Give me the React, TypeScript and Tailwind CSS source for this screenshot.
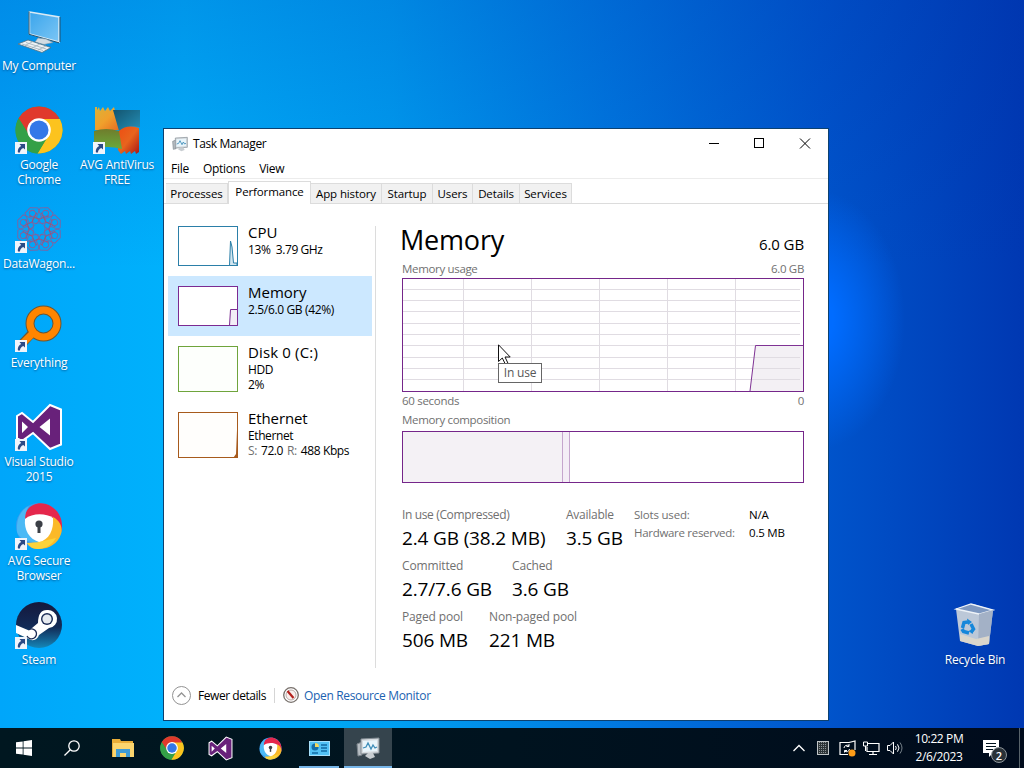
import React from "react";

type IconProps = { size?: number };

const Chrome: React.FC<IconProps> = ({ size = 48 }) => (
  <svg width={size} height={size} viewBox="0 0 48 48">
    <circle cx="24" cy="24" r="23.5" fill="#34a047" />
    <path d="M24 24 L3.6 12.3 A23.5 23.5 0 0 1 44.4 12.3 Z" fill="#e0392c" />
    <path d="M24 13 H44.9 A23.5 23.5 0 0 1 22.5 47.5 L33.5 29.5 Z" fill="#fcc31e" />
    <path d="M3.6 12.3 L14.5 29.5 L24 24 L24 13 L6 11 Z" fill="#e0392c" />
    <path d="M3.6 12.3 A23.5 23.5 0 0 0 22.5 47.5 L33 30 L14.5 29.5 Z" fill="#34a047" />
    <circle cx="24" cy="24" r="11.8" fill="#fff" />
    <circle cx="24" cy="24" r="9.5" fill="#3478e8" />
  </svg>
);

const VisualStudio: React.FC<IconProps> = ({ size = 48 }) => (
  <svg width={size} height={size} viewBox="0 0 48 48">
    <path
      d="M2 13 L7 10 L18 19 L35 2 L46 6.500 V41.500 L35 46 L18 30 L7 38 L2 35.500 Z"
      fill="#68217a"
      stroke="#fff"
      strokeWidth="2"
    />
    <path d="M7 18.500 V30 L13 24 Z M35 15.500 V32.500 L24.500 24 Z" fill="#fff" />
  </svg>
);

const SecureBrowser: React.FC<IconProps> = ({ size = 48 }) => (
  <svg width={size} height={size} viewBox="0 0 48 48">
    <circle cx="24" cy="24" r="23" fill="#3b9df0" />
    <path d="M9 17 C10 5 21 -1 31 2 C43 6 49 17 46.500 30 C44 23 38 15 28 13 Z" fill="#e5274c" />
    <path d="M38 15 C46 19 48 27 46 32 C42 44 30 49 17 46 L12 41 C25 42 36 34 38 15 Z" fill="#fbb928" />
    <path d="M12 41 C15 46 20 47 24 47 C33 46 38 41 41 36 L24 40 Z" fill="#fcd33b" />
    <path d="M2 30 C1 16 6 8 14 4 C7 14 9 31 24 40 C14 41 5 38 2 30 Z" fill="#4bb9f5" />
    <path d="M10 17 C17 11 31 11 38 16 C39 28 34 38 24 40 C14 37 9 28 10 17 Z" fill="#fff" />
    <circle cx="24" cy="22" r="3.600" fill="#3b3f46" />
    <path d="M22.500 23 H25.500 V31 H22.500 Z" fill="#3b3f46" />
  </svg>
);

const MyComputer = () => (
  <svg width="48" height="48" viewBox="2 -1 48 48">
    <defs>
      <linearGradient id="screen" x1="0" y1="0" x2="1" y2="1">
        <stop offset="0" stopColor="#3aa5ec" />
        <stop offset="1" stopColor="#7cc6f5" />
      </linearGradient>
    </defs>
    <path d="M16.500 4 L46 9 V34 L16.500 26 Z" fill="url(#screen)" stroke="#d8eaf5" strokeWidth="1.500" />
    <path d="M16 3.500 V26.300 L46 34.800" fill="none" stroke="#23516f" />
    <path d="M47 9 V34" stroke="#23516f" />
    <path d="M25 30 L33 31 L40 34.500 L31 36.500 L22 34 Z" fill="#d3dce2" stroke="#8195a2" strokeWidth=".6" />
    <path d="M5 36 L15 32 L38 39.500 L29 44.500 Z" fill="#edf2f5" stroke="#54707f" strokeWidth=".8" />
    <path d="M9 36 L30 42.500 M13 34.500 L33 41 M12 37.500 L20 33.500 M19 40 L27 36 M25 42 L33 38" stroke="#9eafb8" strokeWidth=".8" />
  </svg>
);

const AvgFree = () => (
  <svg width="48" height="48" viewBox="0 0 48 48">
    <defs>
      <linearGradient id="avgA" x1="0" y1="0" x2="1" y2="1">
        <stop offset="0" stopColor="#d9b23a" />
        <stop offset=".5" stopColor="#f0a02c" />
        <stop offset="1" stopColor="#e66a22" />
      </linearGradient>
      <linearGradient id="avgB" x1="0" y1="0" x2="1" y2="1">
        <stop offset="0" stopColor="#13546f" />
        <stop offset="1" stopColor="#2590b8" />
      </linearGradient>
      <linearGradient id="avgC" x1="0" y1="0" x2="1" y2="1">
        <stop offset="0" stopColor="#ee4d12" />
        <stop offset=".5" stopColor="#e8641d" />
        <stop offset="1" stopColor="#a81717" />
      </linearGradient>
      <linearGradient id="avgD" x1="0" y1="0" x2="0" y2="1">
        <stop offset="0" stopColor="#6f7c2c" />
        <stop offset="1" stopColor="#6aaa3c" />
      </linearGradient>
    </defs>
    <path d="M2 1 H4 V4 L6 1 L7 5 L10 1 L12 5 L15 1 L17 5 L21 1 L27 24 H2 Z" fill="url(#avgA)" />
    <path d="M20 4 H47 V21 Q35 19 26 25 Z" fill="url(#avgB)" />
    <path d="M26 25 Q34 18 46 22 V46 L43 48 L42 45 L38 48 L37 45 L33 48 L32 45 L28 48 L25 44 Z" fill="url(#avgC)" />
    <path d="M1 25 Q13 21 26 25 L29 43 Q14 39 1 43 Z" fill="url(#avgD)" />
  </svg>
);

const DataWagon = () => (
  <svg width="48" height="48" viewBox="0 0 48 48" fill="none" stroke="#85609c" strokeWidth=".9">
    {[0, 45, 90, 135, 180, 225, 270, 315].map((angle) => (
      <g key={angle} transform={`rotate(${angle + 22.5} 24 24)`}>
        <path d="M17 14 V4 L24 1 L31 4 V14 L24 18 Z" />
        <path d="M20 8 L28 15 M28 8 L20 15" stroke="#a24f72" />
        <circle cx="24" cy="7" r="3" />
      </g>
    ))}
    <circle cx="24" cy="24" r="6" strokeDasharray="2 1" />
  </svg>
);

const Everything = () => (
  <svg width="48" height="48" viewBox="0 0 48 48">
    <circle cx="28.500" cy="19.500" r="13.500" fill="none" stroke="#6b5634" strokeWidth="9" />
    <path d="M19 27 L5 42" stroke="#6b5634" strokeWidth="9" />
    <path d="M20 27 L4 43" stroke="#ff8500" strokeWidth="7" />
    <circle cx="28.500" cy="19.500" r="13.500" fill="none" stroke="#ff8500" strokeWidth="7" />
  </svg>
);

const Steam = () => (
  <svg width="48" height="48" viewBox="0 0 48 48">
    <defs>
      <linearGradient id="steam" x1="0" y1="0" x2="0" y2="1">
        <stop offset="0" stopColor="#15183c" />
        <stop offset=".55" stopColor="#122b57" />
        <stop offset="1" stopColor="#1587b8" />
      </linearGradient>
    </defs>
    <circle cx="24" cy="24" r="23" fill="url(#steam)" />
    <path d="M1 24 L14 29.500 L23 22 Q23 9 32 9 A9 9 0 0 1 34 27 L24 34 Q22 40 16 39 L1 32 Z" fill="#fff" />
    <circle cx="32" cy="18" r="6" fill="#1b2b55" />
    <circle cx="32" cy="18" r="4.600" fill="#e6eaf0" />
    <path d="M14 28.500 A5 5 0 1 1 12 35" fill="none" stroke="#1b2b55" strokeWidth="1.300" />
  </svg>
);

const RecycleBin = () => (
  <svg width="48" height="48" viewBox="0 -1 48 48">
    <path d="M5 7 L22 2 L42 8 L38 42 L27 44 L9 39 Z" fill="#bcc8d8" />
    <path d="M5 7 L20 2 L42 8 L28 12 Z" fill="#7e98c0" stroke="#eef3f8" strokeWidth="1.300" />
    <path d="M28 12 L42 8 L38 42 L27 44 Z" fill="#a3b1c6" />
    <path d="M9 32 L25 37 L38 34 L38 42 L27 44 L9 39 Z" fill="#dad6cc" />
    <g fill="none" stroke="#1687da" strokeWidth="3.500">
      <path d="M11.500 26 L13 20.500 L17 20" />
      <path d="M20 22 L22.500 27 L21 29" />
      <path d="M18 31 L12.500 29.500 L11 27" />
    </g>
    <path d="M16 16.500 L21 20 L17 23 Z M24 26 L21.500 32 L17.500 29 Z" fill="#1687da" />
  </svg>
);

const Shortcut = () => (
  <svg className="absolute bottom-0 left-0" width="12" height="12" viewBox="0 0 12 12">
    <rect width="12" height="12" fill="#f0f4fb" />
    <path d="M4.500 2 H10 V7.500 L8.300 6 C6 7 5 8.500 5 10.500 H3 C2.300 7.500 4 5 6.200 3.900 Z" fill="#2c4a86" />
  </svg>
);

const TaskManagerIcon: React.FC<IconProps> = ({ size = 16 }) => (
  <svg width={size} height={size} viewBox="0 0 24 24">
    <path d="M1 8 L6 6 V19 L2 20 Z" fill="#b8bec3" stroke="#7c858c" />
    <path d="M5 3 L23 2 V17 L5 18 Z" fill="#d6dbdf" stroke="#828b92" />
    <path d="M7 5 L21 4.200 V15 L7 16 Z" fill="#e9f5fb" />
    <path d="M7 12 L10 11 L12 7 L15 13 L17 9 L19 12 L21 11" fill="none" stroke="#3f8db8" strokeWidth="1.300" />
    <path d="M12 17 H17 L19 21 L14 23 L9 20 Z" fill="#c8cdd1" />
  </svg>
);

type Shortcuts = { label: string; place: string; icon: React.ReactNode; link?: boolean };

const desktopIcons: Shortcuts[] = [
  { label: "My Computer", place: "left-0 top-[7px]", icon: <MyComputer /> },
  { label: "Google Chrome", place: "left-0 top-[106px]", icon: <Chrome />, link: true },
  { label: "AVG AntiVirus FREE", place: "left-[78px] top-[106px]", icon: <AvgFree />, link: true },
  { label: "DataWagon...", place: "left-0 top-[205px]", icon: <DataWagon />, link: true },
  { label: "Everything", place: "left-0 top-[304px]", icon: <Everything />, link: true },
  { label: "Visual Studio 2015", place: "left-0 top-[403px]", icon: <VisualStudio />, link: true },
  { label: "AVG Secure Browser", place: "left-0 top-[502px]", icon: <SecureBrowser />, link: true },
  { label: "Steam", place: "left-0 top-[601px]", icon: <Steam />, link: true },
  { label: "Recycle Bin", place: "left-[936px] top-[601px]", icon: <RecycleBin /> },
];

const DesktopIcon: React.FC<Shortcuts> = ({ label, place, icon, link }) => (
  <div className={`absolute flex w-[78px] flex-col items-center ${place}`}>
    <div className="relative h-12 w-12">
      {icon}
      {link && <Shortcut />}
    </div>
    <span className="mt-[3px] w-[78px] text-center text-[12px] leading-[15px] tracking-[-0.22px] text-white [text-shadow:0_1px_2px_rgba(0,40,90,0.6)]">
      {label}
    </span>
  </div>
);

const tabs = [
  { name: "Processes", width: "w-[62px]" },
  { name: "Performance", width: "w-[83px]", active: true },
  { name: "App history", width: "w-[71px]" },
  { name: "Startup", width: "w-[51px]" },
  { name: "Users", width: "w-[40px]" },
  { name: "Details", width: "w-[47px]" },
  { name: "Services", width: "w-[52px]" },
];

const Resources = () => (
  <div className="flex w-[204px] flex-col">
    <div className="flex h-[60px] gap-[10px] px-[10px] pt-[10px]">
      <svg width="60" height="40" className="shrink-0">
        <rect x=".5" y=".5" width="59" height="39" fill="#fff" stroke="#2b7fa8" />
        <path d="M51.500 39.500 L52.500 15 L54 21 L55.500 37 L59 37 V39.500 Z" fill="#d3e6f0" stroke="#2b7fa8" />
      </svg>
      <div className="-mt-[4px]">
        <div className="text-[15px] leading-5">CPU</div>
        <div className="text-[12px] leading-[15px] tracking-[-0.42px]">13%&nbsp; 3.79 GHz</div>
      </div>
    </div>
    <div className="flex h-[60px] gap-[10px] bg-[#cce8ff] px-[10px] pt-[10px]">
      <svg width="60" height="40" className="shrink-0">
        <rect x=".5" y=".5" width="59" height="39" fill="#fff" stroke="#7b2a92" />
        <path d="M51.500 39.500 L52.500 23.500 H59.500 V39.500 Z" fill="#f3edf6" stroke="#7b2a92" />
      </svg>
      <div className="-mt-[4px]">
        <div className="text-[15px] leading-5">Memory</div>
        <div className="text-[12px] leading-[15px] tracking-[-0.35px]">2.5/6.0 GB (42%)</div>
      </div>
    </div>
    <div className="flex h-[66px] gap-[10px] px-[10px] pt-[10px]">
      <svg width="60" height="46" className="shrink-0">
        <rect x=".5" y=".5" width="59" height="45" fill="#fdfffc" stroke="#6fa43c" />
      </svg>
      <div className="-mt-[4px]">
        <div className="text-[15px] leading-5 tracking-[0.15px]">Disk 0 (C:)</div>
        <div className="text-[12px] leading-[15px] tracking-[-0.35px]">HDD</div>
        <div className="text-[12px] leading-[15px] tracking-[-0.35px]">2%</div>
      </div>
    </div>
    <div className="flex h-[66px] gap-[10px] px-[10px] pt-[10px]">
      <svg width="60" height="46" className="shrink-0">
        <rect x=".5" y=".5" width="59" height="45" fill="#fffefc" stroke="#a75a1c" />
        <path d="M55.500 45.500 L58 42 L59 18 V45.500 Z" fill="#a75a1c" />
      </svg>
      <div className="-mt-[4px]">
        <div className="text-[15px] leading-5 tracking-[-0.1px]">Ethernet</div>
        <div className="text-[12px] leading-[15px] tracking-[-0.4px]">Ethernet</div>
        <div className="flex gap-[4px] whitespace-nowrap text-[12px] leading-[15px] tracking-[-0.4px]">
          <span className="text-[#707070]">S:</span>
          <span>72.0</span>
          <span className="text-[#707070]">R:</span>
          <span>488 Kbps</span>
        </div>
      </div>
    </div>
  </div>
);

const rows = [11.5, 22.5, 33.5, 45.5, 56.5, 67.5, 79.5, 90.5, 101.5];
const columns = [61.5, 129.5, 197.5, 265.5, 333.5];

const UsageGraph = () => (
  <svg width="402" height="114">
    <rect width="402" height="114" fill="#fff" />
    <path d="M348 113 L353.500 67.500 H402 V113 Z" fill="#f3f0f4" />
    {rows.map((y) => (
      <path key={y} d={`M1 ${y} H398`} stroke="#e0dce2" />
    ))}
    {columns.map((x) => (
      <path key={x} d={`M${x} 1 V113`} stroke="#e0dce2" />
    ))}
    <path d="M348 113 L353.500 67.500 H402" fill="none" stroke="#7f3394" />
    <rect x=".5" y=".5" width="401" height="113" fill="none" stroke="#75268a" />
  </svg>
);

type StatProps = { label: string; value: string; width: string; labelClass?: string };

const Stat: React.FC<StatProps> = ({ label, value, width, labelClass = "tracking-[-0.15px]" }) => (
  <div className={`${width} whitespace-nowrap`}>
    <div className={`text-[12px] leading-4 text-[#707070] ${labelClass}`}>{label}</div>
    <div className="mt-[2px] text-[19px] leading-[26px] tracking-[-0.15px]">{value}</div>
  </div>
);

const MemoryPanel = () => (
  <div className="ml-[26px] flex w-[402px] flex-col">
    <div className="flex h-[34px] items-end justify-between">
      <h1 className="-ml-[2px] text-[27px] leading-[34px] tracking-[-0.2px]">Memory</h1>
      <span className="pb-[2px] text-[15px] leading-[22px] tracking-[-0.1px]">6.0 GB</span>
    </div>
    <div className="mt-[4px] flex justify-between text-[11.5px] leading-4 tracking-[-0.33px] text-[#707070]">
      <span>Memory usage</span>
      <span>6.0 GB</span>
    </div>
    <div className="relative mt-px h-[114px]">
      <UsageGraph />
      <svg className="absolute left-[96px] top-[66px]" width="14" height="22" viewBox="0 0 14 22">
        <path d="M.5 .8 V17.500 L4.300 14 L7.500 20.500 L10 19.300 L7 13 H12.200 Z" fill="#fff" stroke="#111" />
      </svg>
      <div className="absolute left-[96px] top-[85px] flex h-5 w-11 items-center justify-center border border-[#666] bg-white text-[12px] tracking-[-0.2px] text-[#575757]">
        In use
      </div>
    </div>
    <div className="mt-px flex justify-between text-[11.5px] leading-4 tracking-[-0.3px] text-[#707070]">
      <span>60 seconds</span>
      <span>0</span>
    </div>
    <div className="mt-[3px] text-[11.5px] leading-4 tracking-[-0.33px] text-[#707070]">Memory composition</div>
    <div className="mt-[3px] flex h-[52px] border border-[#75268a]">
      <div className="w-[159px] bg-[#f4f1f5]" />
      <div className="w-[8px] border-x border-[#c5a6cd] bg-[#f4eef6]" />
    </div>
    <div className="mt-[24px] flex">
      <div className="flex flex-col gap-[7px]">
        <div className="flex">
          <Stat label="In use (Compressed)" value="2.4 GB (38.2 MB)" width="w-[164px]" labelClass="tracking-[-0.36px]" />
          <Stat label="Available" value="3.5 GB" width="w-[68px]" labelClass="tracking-[-0.25px]" />
        </div>
        <div className="flex">
          <Stat label="Committed" value="2.7/7.6 GB" width="w-[110px]" />
          <Stat label="Cached" value="3.6 GB" width="w-[70px]" />
        </div>
        <div className="flex">
          <Stat label="Paged pool" value="506 MB" width="w-[87px]" />
          <Stat label="Non-paged pool" value="221 MB" width="w-[100px]" />
        </div>
      </div>
      <div className="-mt-px grid h-9 grid-cols-[115px_55px] whitespace-nowrap text-[11.5px] leading-[18px] tracking-[-0.2px]">
        <span className="text-[#707070]">Slots used:</span>
        <span>N/A</span>
        <span className="tracking-[-0.3px] text-[#707070]">Hardware reserved:</span>
        <span>0.5 MB</span>
      </div>
    </div>
  </div>
);

const TaskManager = () => (
  <div className="absolute left-[163px] top-[128px] flex h-[593px] w-[666px] flex-col border border-[#0c4170] bg-white text-black">
    <div className="flex h-[30px] items-center justify-between pl-2">
      <div className="flex items-center gap-[5px] text-[12px]">
        <TaskManagerIcon />
        <span className="tracking-[-0.4px]">Task Manager</span>
      </div>
      <svg width="137" height="28" viewBox="0 0 137 28" fill="none" stroke="#000">
        <path d="M18 13.500 H28" />
        <rect x="63.500" y="8.500" width="9" height="9" />
        <path d="M109 8.500 L119 18.500 M119 8.500 L109 18.500" />
      </svg>
    </div>
    <div className="flex h-[20px] items-center gap-[14px] border-b border-[#ececec] pl-[7px] text-[12px] tracking-[-0.28px]">
      <span>File</span>
      <span>Options</span>
      <span>View</span>
    </div>
    <div className="flex h-[25px] items-end border-b border-[#dcdcdc] pl-[2px]">
      {tabs.map((tab) => (
        <div
          key={tab.name}
          className={`${tab.width} flex shrink-0 items-center justify-center whitespace-nowrap text-[11.5px] tracking-[-0.12px] ${
            tab.active
              ? "-mb-px h-[23px] border-x border-t border-[#dcdcdc] bg-white pb-[2px]"
              : "h-[20px] border-r border-t border-[#dcdcdc] bg-[#f1f1f1]"
          }`}
        >
          {tab.name}
        </div>
      ))}
    </div>
    <div className="flex h-[464px] pl-[4px] pt-[12px]">
      <Resources />
      <div className="ml-[3px] mt-[10px] h-[442px] w-px bg-[#dcdcdc]" />
      <div className="pt-[7px]">
        <MemoryPanel />
      </div>
    </div>
    <div className="mt-[17px] flex h-[20px] items-center pl-2 text-[12px]">
      <svg width="19" height="19" viewBox="0 0 19 19" fill="none">
        <circle cx="9.500" cy="9.500" r="9" stroke="#939393" />
        <path d="M5.500 11 L9.500 7 L13.500 11" stroke="#939393" strokeWidth="1.300" />
      </svg>
      <span className="ml-[7px] w-[76px] pt-px tracking-[-0.45px]">Fewer details</span>
      <div className="h-[15px] w-px bg-[#d5d5d5]" />
      <svg className="ml-[8px]" width="16" height="16" viewBox="0 0 16 16" fill="none">
        <circle cx="8" cy="8" r="7.300" stroke="#77706b" strokeWidth="1.300" />
        <circle cx="8" cy="8" r="5" fill="#f9efed" stroke="#b7a9a5" />
        <path d="M4.500 4 L10.500 11" stroke="#b3201c" strokeWidth="2.200" />
      </svg>
      <span className="ml-[5px] pt-px tracking-[-0.33px] text-[#1b62b1]">Open Resource Monitor</span>
    </div>
  </div>
);

const Taskbar = () => (
  <div className="absolute bottom-0 left-0 flex h-[40px] w-full items-stretch justify-between bg-[linear-gradient(90deg,#001720,#00131f_50%,#000b1c)] text-white">
    <div className="flex">
      <div className="flex w-12 items-center justify-center">
        <svg width="16" height="16" viewBox="0 0 16 16" fill="#fff">
          <path d="M0 2.300 L6.700 1.400 V7.600 H0 Z M7.500 1.300 L16 0 V7.600 H7.500 Z M0 8.400 H6.700 V14.600 L0 13.700 Z M7.500 8.400 H16 V16 L7.500 14.700 Z" />
        </svg>
      </div>
      <div className="flex w-12 items-center justify-center">
        <svg width="16" height="16" viewBox="0 0 16 16" fill="none" stroke="#fff" strokeWidth="1.300">
          <circle cx="10" cy="6" r="5.200" />
          <path d="M6.300 9.700 L.5 15.500" />
        </svg>
      </div>
      <div className="flex w-[53px] items-center justify-center">
        <svg width="22" height="20" viewBox="0 0 22 20">
          <path d="M0 1 H8 L9 3 H21 V19 H0 Z" fill="#e9ad38" />
          <path d="M1 5 H22 V19 H1 Z" fill="#fbd56e" />
          <path d="M4 19 V11 H18 V19 H14 V15 H8 V19 Z" fill="#3f9bd5" />
        </svg>
      </div>
      <div className="flex w-[46px] items-center justify-center">
        <Chrome size={24} />
      </div>
      <div className="flex w-[51px] items-center justify-center">
        <VisualStudio size={25} />
      </div>
      <div className="flex w-[48px] items-center justify-center">
        <SecureBrowser size={23} />
      </div>
      <div className="ml-[5px] flex w-[40px] items-center justify-center border-b-2 border-[#76b5e8] pt-[2px]">
        <svg width="21" height="15" viewBox="0 0 21 15">
          <rect width="21" height="15" fill="#52c1f4" />
          <rect x=".5" y=".5" width="20" height="14" fill="none" stroke="#a6e0fb" />
          <circle cx="6" cy="6" r="3.500" fill="#146ea9" />
          <path d="M6 6 V2 A4 4 0 0 1 10 6 Z" fill="#f4d75c" />
          <path d="M12 4 H18 M12 7 H18 M12 10 H18 M3 12 H9" stroke="#126ba4" strokeWidth="1.300" />
        </svg>
      </div>
      <div className="ml-[5px] flex w-[48px] items-center justify-center border-b-2 border-[#76b5e8] bg-[#35444d] pt-[2px]">
        <TaskManagerIcon size={24} />
      </div>
    </div>
    <div className="flex items-center">
      <svg width="12" height="8" viewBox="0 0 12 8" fill="none" stroke="#fff" strokeWidth="1.300">
        <path d="M.5 7 L6 1.500 L11.500 7" />
      </svg>
      <svg className="ml-[12px]" width="12" height="14" viewBox="0 0 12 14">
        <rect x=".5" y=".5" width="11" height="13" fill="#2d3437" stroke="#c0c5c7" />
        <path d="M2.500 1 V13 M4.500 1 V13 M6.500 1 V13 M8.500 1 V13" stroke="#8d9497" strokeDasharray="1 1" />
      </svg>
      <svg className="ml-[10px]" width="17" height="17" viewBox="0 0 17 17" fill="none" stroke="#fff">
        <path d="M16 10 V1 L10 2.500 H1 V14.500 H9" strokeWidth="1.200" />
        <path d="M5 8 A3 3 0 0 1 10 6 M10 4 V6.500 H7.500 M10.500 9 A3 3 0 0 1 5.500 11 M5.500 12.500 V10.500 H8" />
        <circle cx="13" cy="13" r="3.500" fill="#ff9d17" stroke="none" />
      </svg>
      <svg className="ml-[7px]" width="17" height="15" viewBox="0 0 17 15" fill="none" stroke="#fff">
        <path d="M5 2.500 H16 V10.500 H4 V6 M10 10.500 V13.500 M6 13.500 H14" strokeWidth="1.200" />
        <path d="M.5 1 H4.500 V5 H.5 Z M2.500 5 V10" />
      </svg>
      <svg className="ml-[7px]" width="17" height="14" viewBox="0 0 17 14" fill="none" stroke="#fff">
        <path d="M.5 4.500 H3 L6.500 1 V13 L3 9.500 H.5 Z" />
        <path d="M8.500 5 Q10 7 8.500 9 M10.500 3.300 Q13.500 7 10.500 10.700" />
        <path d="M13 1.500 Q17 7 13 12.500" stroke="#77828a" />
      </svg>
      <div className="ml-[9px] flex w-[52px] flex-col items-center whitespace-nowrap text-[12px] leading-[18px] tracking-[-0.38px]">
        <span>10:22 PM</span>
        <span>2/6/2023</span>
      </div>
      <div className="relative ml-[18px] h-[26px] w-[25px]">
        <svg width="17" height="18" viewBox="0 0 17 18" className="mt-[5px]">
          <path d="M0 0 H16 V13 H10 L6 17 V13 H0 Z" fill="#fff" />
          <path d="M3 3.500 H13 M3 6.500 H13 M3 9.500 H10" stroke="#00111d" />
        </svg>
        <div className="absolute left-[8px] top-[12px] flex h-4 w-4 items-center justify-center rounded-full border border-[#8c949a] bg-[#293137] text-[11px] font-semibold leading-none">
          2
        </div>
      </div>
      <div className="ml-[11px] mr-[4px] h-[40px] w-px bg-[#58636a]" />
    </div>
  </div>
);

const App: React.FC = () => {
  return (
    <div className="relative h-[768px] w-[1024px] overflow-hidden bg-[radial-gradient(ellipse_90px_130px_at_815px_320px,#006cff_0%,#006cff_20%,rgba(0,108,255,0)_100%),linear-gradient(180deg,rgba(0,50,170,0.22)_0%,rgba(0,50,170,0)_35%),linear-gradient(90deg,#00a6fa_0%,#00b2fc_18%,#00a0f2_38%,#0078e0_60%,#0055cc_80%,#0038b2_100%)] font-['Open_Sans','Noto_Sans',sans-serif]">
      {desktopIcons.map((item) => (
        <DesktopIcon key={item.label} {...item} />
      ))}
      <TaskManager />
      <Taskbar />
    </div>
  );
};

export default App;
